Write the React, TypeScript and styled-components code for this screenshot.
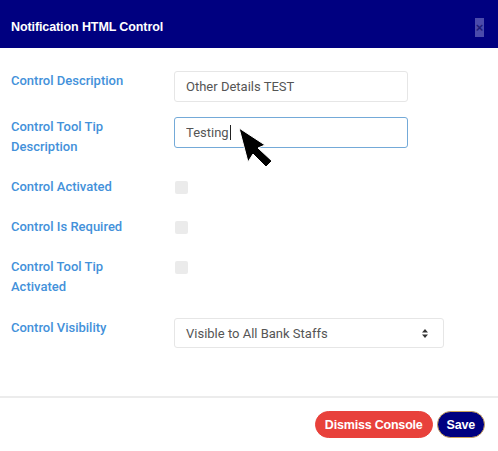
import React from 'react';
import styled, { createGlobalStyle } from 'styled-components';

const GlobalStyle = createGlobalStyle`
  body {
    margin: 0;
    background: #fff;
    font-family: Roboto, 'Noto Sans', sans-serif;
  }
`;

const App = () => {
  return (
    <>
      <GlobalStyle />
      <Modal>
        <Header>
          <Title>Notification HTML Control</Title>
          <CloseButton>×</CloseButton>
        </Header>

        <Body>
          <Row $gap={15}>
            <Label>Control Description</Label>
            <TextInput type="text" defaultValue="Other Details TEST" />
          </Row>
          <Row>
            <Label>Control Tool Tip Description</Label>
            <InputWrap>
              <TextInput type="text" defaultValue="Testing" $focused />
              <Caret />
            </InputWrap>
          </Row>
          <Row>
            <Label>Control Activated</Label>
            <CheckBox />
          </Row>
          <Row>
            <Label>Control Is Required</Label>
            <CheckBox />
          </Row>
          <Row $gap={21}>
            <Label>Control Tool Tip Activated</Label>
            <CheckBox />
          </Row>
          <Row $gap={0}>
            <Label>Control Visibility</Label>
            <SelectBox>
              <span>Visible to All Bank Staffs</span>
              <svg width="6" height="9" viewBox="0 0 6 9">
                <path d="M3 0 L6 3.5 L0 3.5 Z M0 5.5 L6 5.5 L3 9 Z" fill="#333" />
              </svg>
            </SelectBox>
          </Row>
        </Body>

        <Footer>
          <PillButton $bg="#e8413b">Dismiss Console</PillButton>
          <PillButton $bg="#000080" $outline>Save</PillButton>
        </Footer>

        <Pointer width="40" height="46" viewBox="0 0 40 46">
          <path
            d="M3 4 L29 21 L22 24 L36 37 L30 43 L17 30 L12 38 Z"
            fill="#000"
            stroke="#fff"
            strokeWidth="1"
            strokeLinejoin="round"
          />
        </Pointer>
      </Modal>
    </>
  );
};

const Modal = styled.div`
  position: relative;
  width: 498px;
  height: 451px;
  background: #fff;
  overflow: hidden;
`;

const Header = styled.div`
  height: 48px;
  background: #000080;
  display: flex;
  align-items: center;
  justify-content: space-between;
  padding: 6px 14px 0 11px;
  box-sizing: border-box;
`;

const Title = styled.div`
  color: #fff;
  font-family: 'Liberation Sans', Arial, sans-serif;
  font-weight: bold;
  font-size: 12.5px;
  letter-spacing: -0.1px;
`;

const CloseButton = styled.div`
  width: 9px;
  height: 19px;
  background: #4b4bab;
  color: #1c1c78;
  font-family: 'Liberation Sans', Arial, sans-serif;
  font-weight: bold;
  font-size: 13px;
  line-height: 19px;
  text-align: center;
`;

const Body = styled.div`
  padding: 23px 0 48px 11px;
`;

const Row = styled.div<{ $gap?: number }>`
  display: grid;
  grid-template-columns: 163px 1fr;
  align-items: start;
  margin-bottom: ${(p) => (p.$gap ?? 20)}px;
`;

const Label = styled.div`
  width: 135px;
  color: #4391da;
  font-size: 13px;
  font-weight: 500;
  line-height: 20px;
`;

const InputWrap = styled.div`
  position: relative;
  width: 234px;
`;

const TextInput = styled.input<{ $focused?: boolean }>`
  display: block;
  width: 234px;
  height: 31px;
  box-sizing: border-box;
  padding: 0 11px;
  border: 1px solid ${(p) => (p.$focused ? '#74aad8' : '#e6e6e6')};
  border-radius: 3px;
  font-family: Roboto, sans-serif;
  font-size: 13px;
  color: #555;
  background: #fff;
  outline: none;
`;

const Caret = styled.span`
  position: absolute;
  left: 56px;
  top: 8px;
  width: 1px;
  height: 15px;
  background: #222;
`;

const CheckBox = styled.div`
  width: 13px;
  height: 13px;
  margin: 4px 0 0 1px;
  border-radius: 2px;
  background: #ebebeb;
`;

const SelectBox = styled.div`
  width: 270px;
  height: 30px;
  box-sizing: border-box;
  border: 1px solid #e6e6e6;
  border-radius: 3px;
  padding: 0 15px 0 11px;
  display: flex;
  align-items: center;
  justify-content: space-between;
  font-size: 13px;
  color: #555;
`;

const Footer = styled.div`
  border-top: 2px solid #ececec;
  padding: 13px 13px 0 0;
  display: flex;
  justify-content: flex-end;
  gap: 4px;
`;

const PillButton = styled.button<{ $bg: string; $outline?: boolean }>`
  height: 27px;
  padding: 0 9px;
  border-radius: 14px;
  border: 1px solid ${(p) => (p.$outline ? '#c9a15a' : p.$bg)};
  background: ${(p) => p.$bg};
  color: #fff;
  font-family: 'Liberation Sans', Arial, sans-serif;
  font-weight: bold;
  font-size: 12.5px;
  letter-spacing: -0.2px;
  cursor: pointer;
`;

const Pointer = styled.svg`
  position: absolute;
  left: 236px;
  top: 124px;
`;

export default App;
